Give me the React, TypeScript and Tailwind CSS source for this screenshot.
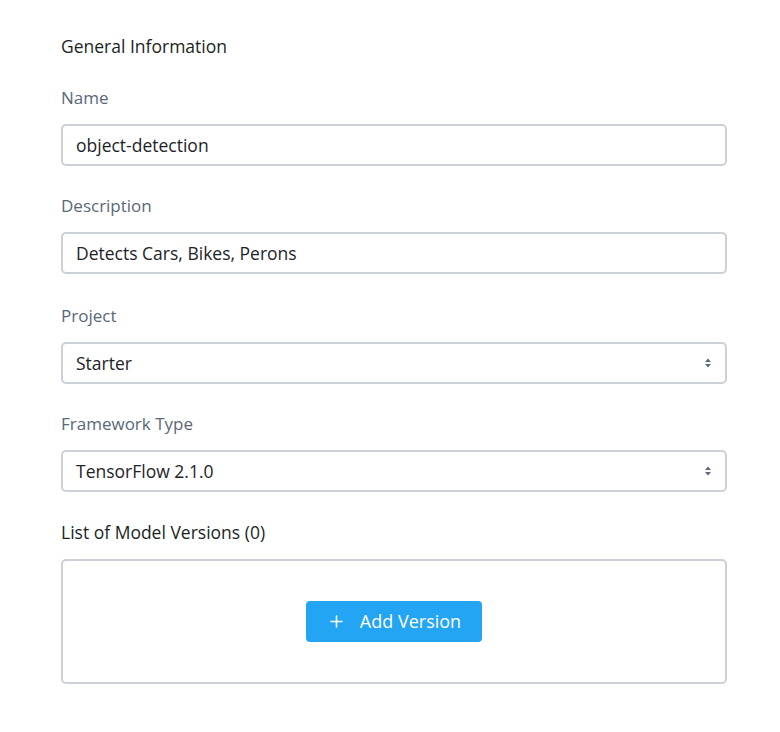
import { Plus } from 'lucide-react'

const font = { fontFamily: '"Open Sans", Lato, sans-serif' }

const SelectArrows = () => (
  <svg width="8" height="12" viewBox="0 0 8 12" className="text-[#5f6b7a]">
    <path d="M4 1.5 L7 5 H1 Z" fill="currentColor" />
    <path d="M4 10.5 L7 7 H1 Z" fill="currentColor" />
  </svg>
)

const Field = ({
  label,
  value,
  select,
  className,
}: {
  label: string
  value: string
  select?: boolean
  className?: string
}) => {
  return (
    <div className={`flex flex-col gap-[14px] ${className ?? ''}`}>
      <label className="text-[17px] leading-6 text-[#5a6779]">{label}</label>
      <div className="h-[42px] flex items-center justify-between px-[13px] border-2 border-[#cdd0d8] rounded-[5px] bg-white">
        <span className="text-[17.5px] text-[#1e2328]">{value}</span>
        {select && <SelectArrows />}
      </div>
    </div>
  )
}

export default function App() {
  return (
    <div className="min-h-screen bg-white" style={font}>
      <div className="w-[666px] ml-[61px] pt-[34px] flex flex-col">
        <h2 className="text-[17.5px] leading-6 text-[#1b1f24]">General Information</h2>
        {/* fields */}
        <Field className="mt-[28px]" label="Name" value="object-detection" />
        <Field className="mt-[28px]" label="Description" value="Detects Cars, Bikes, Perons" />
        <Field className="mt-[30px]" label="Project" value="Starter" select />
        <Field className="mt-[28px]" label="Framework Type" value="TensorFlow 2.1.0" select />
        <h3 className="mt-[28px] text-[17.5px] leading-6 text-[#1b1f24]">List of Model Versions (0)</h3>
        <div className="mt-[15px] h-[125px] flex items-center justify-center border-2 border-[#cdd0d8] rounded-[5px]">
          <button className="w-[176px] h-[41px] flex items-center justify-center gap-[14px] bg-[#23a5f3] text-white rounded-[4px] text-[18px]">
            <Plus width={19} height={19} strokeWidth={2} />
            <span>Add Version</span>
          </button>
        </div>
      </div>
    </div>
  )
}
